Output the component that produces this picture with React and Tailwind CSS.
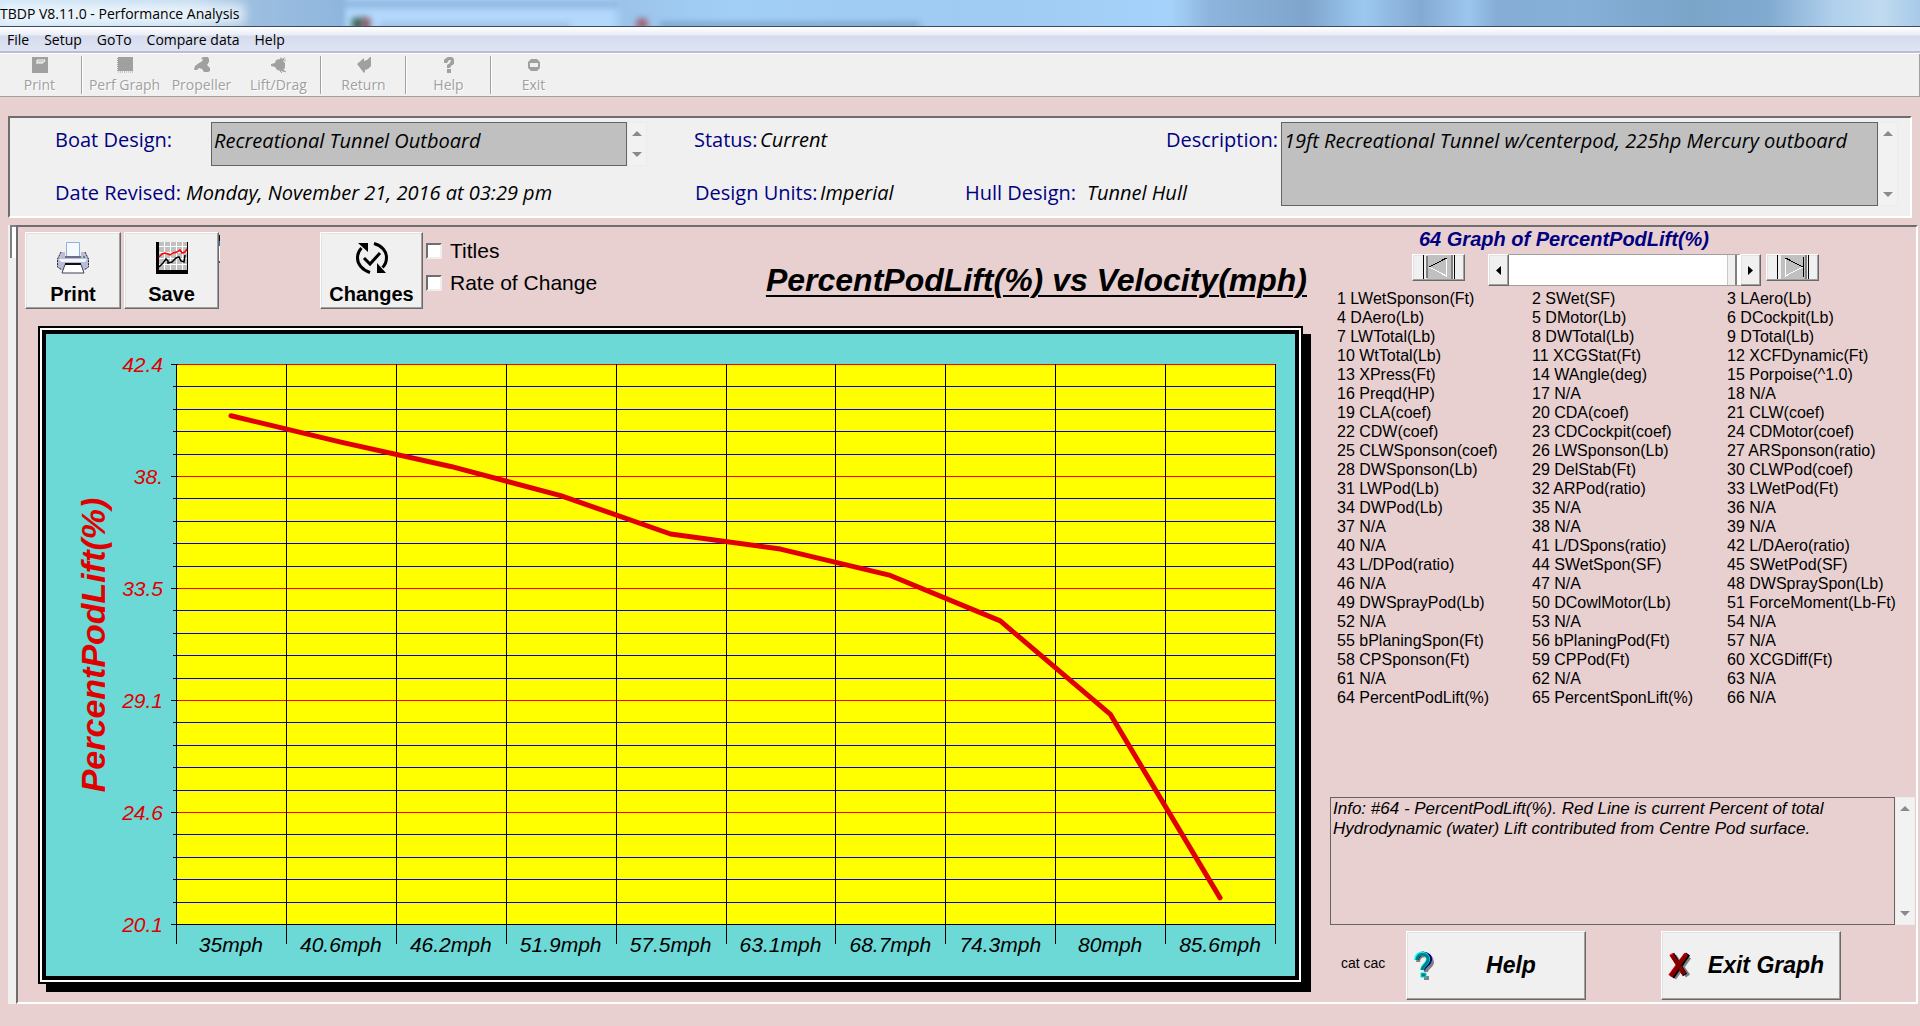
import { useState } from "react";

const raised =
  "border border-t-white border-l-white border-r-[#696969] border-b-[#696969] bg-[#f0f0f0] shadow-[inset_-1px_-1px_0_#a0a0a0,inset_1px_1px_0_#e3e3e3]";
const sunken =
  "border-2 border-t-[#6e6e6e] border-l-[#6e6e6e] border-r-white border-b-white";

const menus = ["File", "Setup", "GoTo", "Compare data", "Help"];

const speeds = ["35", "40.6", "46.2", "51.9", "57.5", "63.1", "68.7", "74.3", "80", "85.6"];
const podLift = [40.34, 39.29, 38.32, 37.16, 35.63, 35.03, 33.98, 32.17, 28.46, 21.14];
const yLabels = ["42.4", "38.", "33.5", "29.1", "24.6", "20.1"];

const graphs = [
  "LWetSponson(Ft)", "SWet(SF)", "LAero(Lb)",
  "DAero(Lb)", "DMotor(Lb)", "DCockpit(Lb)",
  "LWTotal(Lb)", "DWTotal(Lb)", "DTotal(Lb)",
  "WtTotal(Lb)", "XCGStat(Ft)", "XCFDynamic(Ft)",
  "XPress(Ft)", "WAngle(deg)", "Porpoise(^1.0)",
  "Preqd(HP)", "N/A", "N/A",
  "CLA(coef)", "CDA(coef)", "CLW(coef)",
  "CDW(coef)", "CDCockpit(coef)", "CDMotor(coef)",
  "CLWSponson(coef)", "LWSponson(Lb)", "ARSponson(ratio)",
  "DWSponson(Lb)", "DelStab(Ft)", "CLWPod(coef)",
  "LWPod(Lb)", "ARPod(ratio)", "LWetPod(Ft)",
  "DWPod(Lb)", "N/A", "N/A",
  "N/A", "N/A", "N/A",
  "N/A", "L/DSpons(ratio)", "L/DAero(ratio)",
  "L/DPod(ratio)", "SWetSpon(SF)", "SWetPod(SF)",
  "N/A", "N/A", "DWSpraySpon(Lb)",
  "DWSprayPod(Lb)", "DCowlMotor(Lb)", "ForceMoment(Lb-Ft)",
  "N/A", "N/A", "N/A",
  "bPlaningSpon(Ft)", "bPlaningPod(Ft)", "N/A",
  "CPSponson(Ft)", "CPPod(Ft)", "XCGDiff(Ft)",
  "N/A", "N/A", "N/A",
  "PercentPodLift(%)", "PercentSponLift(%)", "N/A",
];

function TitleBar() {
  return (
    <header className="relative h-[27px] overflow-hidden border-b border-[#3f4a5c] bg-[linear-gradient(90deg,#cfe6f8_0%,#c3dcf0_10%,#9dbfe0_13%,#8fb6de_17.8%,#b3d8fc_18.2%,#b3d8fc_31.8%,#9cc4ea_32.5%,#a2cff6_38%,#9fcaf2_50%,#a5d2fa_61%,#8db4dc_63%,#7fa5cc_68%,#9cc8f0_71%,#84aad2_74%,#9cc6ee_76.5%,#84acd4_78%,#86b0d8_82%,#7aa4c8_88%,#80aad0_92%,#b0d0ec_95.5%,#c0daf0_98%,#a8cae8_100%)]">
      <div className="absolute left-[340px] top-0 h-2 w-[280px] bg-[#8fb6de] blur-[3px]" />
      <div className="absolute left-[352px] top-[18px] h-3 w-3 bg-[#3c6454] blur-[3px]" />
      <div className="absolute left-[362px] top-[18px] h-3 w-2 bg-[#8a5058] blur-[3px]" />
      <div className="absolute left-[380px] top-[24px] h-1 w-[190px] bg-[#8fb0d2] blur-[3px]" />
      <div className="absolute left-[636px] top-[18px] h-3 w-3 rounded-full bg-[#a05a68] blur-[3px]" />
      <div className="absolute left-[660px] top-[23px] h-1 w-[260px] bg-[#6b90b6] blur-[3px]" />
      <div className="absolute left-0 top-1 h-5 w-[245px] bg-white/60 blur-[5px]" />
      <h1 className="relative text-[14px] leading-[27px] text-black">TBDP V8.11.0 - Performance Analysis</h1>
    </header>
  );
}

function ToolButton({ label, children }) {
  return (
    <button
      type="button"
      className="flex w-[77px] flex-col items-center pt-[3px] text-[14px] leading-5 text-[#a0a0a0] [text-shadow:1px_1px_0_#fff]"
    >
      <svg width="16" height="16" viewBox="0 0 16 16" fill="#a0a0a0" className="mb-[2px]">
        {children}
      </svg>
      {label}
    </button>
  );
}

function Separator() {
  return <div className="mx-[3px] my-[2px] w-[2px] border-l border-l-[#a0a0a0] border-r border-r-white" />;
}

function Toolbar() {
  return (
    <div className="flex h-11 border-t border-b border-t-white border-b-[#a0a0a0] bg-[#f0f0f0] pl-px">
      <ToolButton label="Print">
        <path d="M0 0h16v16H0z" />
        <path d="M5 3h8l-1 2H5zM4 6h7" fill="none" stroke="#fff" />
      </ToolButton>
      <Separator />
      <ToolButton label="Perf Graph">
        <path d="M0 0h16v14H0z" />
        <path d="M1 15h15" stroke="#a0a0a0" strokeDasharray="1 1" />
        <path d="M.5 0v15" stroke="#f0f0f0" strokeDasharray="1 1" />
      </ToolButton>
      <ToolButton label="Propeller">
        <path d="M7 1l3-1h4l1 2v3l-2 3 3 3v3l-2 1h-4l-2-3-3-1-2 2H0l1-4 4-3 2-1 2-2z" />
      </ToolButton>
      <ToolButton label="Lift/Drag">
        <path d="M0 7l4-1 1-3 4-1 1-2 1 2 3-2-1 3-1 1 2 2v5l-2 2 2 1-1 1-3-1-4-1-2-3-4-1z" />
        <path d="M13 4l2-1M12 13l3 2M9 14l2 2" stroke="#a0a0a0" strokeWidth="1" />
      </ToolButton>
      <Separator />
      <ToolButton label="Return">
        <path d="M1 7l7-6v3l3-1 3-3h1v9l-3 3-3 1v2L8 16z" />
      </ToolButton>
      <Separator />
      <ToolButton label="Help">
        <path d="M3 6V3l2-2 2-1h4l2 2v5l-3 2-1 2H6V8l3-2 1-3H8L6 6zM6 12h4v4H6z" />
      </ToolButton>
      <Separator />
      <ToolButton label="Exit">
        <path d="M5 2h6l3 3v6l-3 3H5l-3-3V5zM4 6v4h8V6z" fillRule="evenodd" />
      </ToolButton>
      <div className="ml-auto w-px bg-[#a0a0a0]" />
    </div>
  );
}

function ScrollArrows() {
  return (
    <div className="flex w-5 shrink-0 flex-col items-center justify-between border border-[#ececec] bg-[#f2f2f2] py-2">
      <svg width="10" height="5" viewBox="0 0 10 5">
        <path d="M5 0l5 5H0z" fill="#8a8a8a" />
      </svg>
      <svg width="10" height="5" viewBox="0 0 10 5">
        <path d="M0 0h10L5 5z" fill="#8a8a8a" />
      </svg>
    </div>
  );
}

function DesignHeader() {
  const field =
    "resize-none overflow-hidden border border-[#646464] bg-[#c0c0c0] px-[2px] pt-[2px] text-[20px] leading-8 italic text-black outline-none";
  return (
    <section className={`mx-2 mt-[19px] flex h-[102px] bg-[#f0f0f0] pr-3 pt-1 text-[20px] ${sunken}`}>
      <div className="flex-1 pl-[45px] leading-9">
        <div className="flex h-11">
          <label htmlFor="boat" className="w-[156px] text-[#000080]">Boat Design:</label>
          <textarea id="boat" className={`h-11 w-[416px] ${field}`} defaultValue="Recreational Tunnel Outboard" />
          <ScrollArrows />
          <span className="ml-[47px] w-[66px] text-[#000080]">Status:</span>
          <span className="italic">Current</span>
          <label htmlFor="description" className="ml-auto pr-[3px] text-[#000080]">Description:</label>
        </div>
        <div className="mt-[9px] flex">
          <span className="w-[131px] text-[#000080]">Date Revised:</span>
          <span className="w-[509px] italic">Monday, November 21, 2016 at 03:29 pm</span>
          <span className="w-[125px] text-[#000080]">Design Units:</span>
          <span className="w-[145px] italic">Imperial</span>
          <span className="w-[122px] text-[#000080]">Hull Design:</span>
          <span className="italic">Tunnel Hull</span>
        </div>
      </div>
      <textarea
        id="description"
        className={`h-[84px] w-[597px] ${field}`}
        defaultValue="19ft Recreational Tunnel w/centerpod, 225hp Mercury outboard"
      />
      <div className="flex h-[84px]">
        <ScrollArrows />
      </div>
    </section>
  );
}

function BigButton({ label, width, children }) {
  return (
    <button
      type="button"
      className={`flex h-[77px] flex-col items-center pt-[9px] text-[20px] leading-6 font-bold ${width} ${raised}`}
    >
      <svg width="32" height="32" viewBox="0 0 32 32" className="mb-[8px]">
        {children}
      </svg>
      {label}
    </button>
  );
}

function Check({ label }) {
  return (
    <label className="flex items-center gap-2 text-[21px] leading-8">
      <input
        type="checkbox"
        className="h-4 w-4 appearance-none border-2 border-t-[#6e6e6e] border-l-[#6e6e6e] border-r-[#f4ecec] border-b-[#f4ecec] bg-white checked:bg-[#000080]"
      />
      {label}
    </label>
  );
}

function GraphToolbar() {
  return (
    <div className="flex pt-[5px] pl-[7px]">
      <BigButton label="Print" width="w-24">
        <path d="M9.500 0.500h13v14h-13z" fill="#f4f8ff" stroke="#8fb0e0" />
        <path d="M4 10h4v5h16v-5h4l4 7v8l-5 3H5l-5-3v-8z" fill="#b9bcd6" />
        <path d="M4 10L.5 17v8L5 28M28 10l3.500 7v8L27 28" fill="none" stroke="#222433" strokeDasharray="2 1" />
        <path d="M2 17h28l-2 3H4z" fill="#f4f4fb" />
        <path d="M8 14h16v2H8z" fill="#6a6e8c" />
        <path d="M26 15h2" stroke="#3a9a7a" strokeWidth="2" />
        <path d="M8 22.500h16l3 8.500H5z" fill="#fff" stroke="#3c3f58" />
        <path d="M8 22h16" stroke="#111" strokeWidth="2" />
      </BigButton>
      <div className="w-[3px]" />
      <BigButton label="Save" width="w-[95px]">
        <path d="M0 0h32v32H0z" fill="#c0c0c0" />
        <path d="M8.500 0v28M14.500 0v28M20.500 0v28M26.500 0v28M3 4.500h29M3 10.500h29M3 16.500h29M3 22.500h29" stroke="#fff" />
        <path d="M0 0h3v28h29v4H0z" />
        <path d="M31.500 0v28" stroke="#000" />
        <path d="M3 15l3-3 3-1 3 1 2 1 3-2 4-1 3-2 2 3 3-1 2-3" fill="none" stroke="#f00" strokeWidth="1.500" />
        <path d="M3 25l4-4 3-4 2 2v2l4-1 4-4 3-1 2 4 3 1 1-7" fill="none" stroke="#000" strokeWidth="1.500" />
      </BigButton>
      <div className="w-[101px] pt-[3px]">
        <div className="h-[6px] w-px bg-[#111]" />
        <div className="h-[5px] w-px bg-[#1f6fb0]" />
        <div className="h-[15px] w-px bg-white" />
        <div className="h-[2px] w-px bg-[#555]" />
      </div>
      <BigButton label="Changes" width="w-[103px]">
        <path d="M14 30.500C6 28 1.500 22 1.500 16c0-4 2-8 4-10M18 1.500c8 2 12.500 8 12.500 14 0 4-2 8-4 10" fill="none" stroke="#000" strokeWidth="3" />
        <path d="M2 1h10v9zM30 31H21V21z" />
        <path d="M8 16l6 6 10-11" fill="none" stroke="#000" strokeWidth="3" />
      </BigButton>
      <div className="ml-[3px] pt-[3px]">
        <Check label="Titles" />
        <Check label="Rate of Change" />
      </div>
      <h2 className="ml-auto mt-[30px] pr-1 text-[32px] leading-9 font-bold italic underline decoration-2 underline-offset-4">
        PercentPodLift(%) vs Velocity(mph)
      </h2>
    </div>
  );
}

function Chart() {
  const left = 130;
  const top = 30;
  const width = 1099;
  const height = 560;
  const colX = (i) => left + (i * width) / 10;
  const rowY = (i) => top + (i * height) / 25;
  const points = podLift
    .map((v, i) => `${colX(i + 0.5)},${top + ((42.4 - v) / 22.3) * height}`)
    .join(" ");

  return (
    <div className="mt-[17px] mr-2 ml-5 border-2 border-black shadow-[8px_8px_0_#000]">
      <div className="border-2 border-white">
        <svg viewBox="0 0 1249 642" className="block h-auto w-full border-4 border-black bg-[#6cd9d6]">
          <rect x={left} y={top} width={width} height={height} fill="#ff0" />
          <g shapeRendering="crispEdges">
            {Array.from({ length: 26 }, (_, i) => {
              const major = i % 5 === 0;
              const color = i === 25 ? "#000" : major ? "#f00" : "#0000d0";
              return (
                <g key={i}>
                  <path d={`M${left} ${rowY(i) + 0.5}h${width}`} stroke={color} />
                  <path d={`M${left - (major ? 5 : 3)} ${rowY(i) + 0.5}h${major ? 7 : 4}`} stroke="#000" />
                </g>
              );
            })}
            {Array.from({ length: 11 }, (_, i) => (
              <path key={i} d={`M${colX(i) + 0.5} ${top}v${height + 20}`} stroke="#000" />
            ))}
          </g>
          <polyline points={points} fill="none" stroke="#e00000" strokeWidth="5" strokeLinejoin="round" strokeLinecap="round" />
          <g fontSize="21" fontStyle="italic">
            {yLabels.map((t, i) => (
              <text key={t} x={left - 13} y={rowY(i * 5) + 8} textAnchor="end" fill="#e00000">
                {t}
              </text>
            ))}
            {speeds.map((s, i) => (
              <text key={s} x={colX(i + 0.5)} y={top + height + 28} textAnchor="middle">
                {s}mph
              </text>
            ))}
          </g>
          <text
            transform="translate(59 311) rotate(-90)"
            textAnchor="middle"
            fontSize="34"
            fontWeight="bold"
            fontStyle="italic"
            fill="#e00000"
          >
            PercentPodLift(%)
          </text>
        </svg>
      </div>
    </div>
  );
}

function EndButton({ label, children }) {
  return (
    <button type="button" aria-label={label} className={`flex h-[27px] w-[53px] justify-center ${raised}`}>
      <svg width="32" height="24" viewBox="0 0 32 24" shapeRendering="crispEdges">
        <path d="M4 0h24v24H4z" fill="#c0c0c0" />
        {children}
      </svg>
    </button>
  );
}

function GraphPicker() {
  const [index, setIndex] = useState(64);
  const step = `h-8 w-[21px] shrink-0 flex items-center justify-center ${raised}`;
  return (
    <div className="mt-[3px] flex pl-[82px]">
      <EndButton label="First graph">
        <path d="M.5 0v24M31.500 0v24" stroke="#000" />
        <path d="M4 1v22M29 0v24" stroke="#808080" strokeWidth="2" />
        <path d="M23.500 3v18L6 12" fill="none" stroke="#fff" />
        <path d="M6 12L23.500 3" stroke="#000" />
      </EndButton>
      <div className="ml-[23px] flex h-8 w-[273px]">
        <button type="button" aria-label="Previous graph" className={step} onClick={() => setIndex(Math.max(1, index - 1))}>
          <svg width="5" height="9" viewBox="0 0 5 9"><path d="M5 0v9L0 4.500z" /></svg>
        </button>
        <input
          type="range"
          aria-label="Graph number"
          min="0"
          max="65"
          value={index}
          onChange={(e) => setIndex(Number(e.target.value))}
          className="h-8 min-w-0 flex-1 appearance-none border-t border-b border-[#a0a0a0] bg-white [&::-webkit-slider-thumb]:h-[30px] [&::-webkit-slider-thumb]:w-[10px] [&::-webkit-slider-thumb]:appearance-none [&::-webkit-slider-thumb]:border-r-2 [&::-webkit-slider-thumb]:border-l [&::-webkit-slider-thumb]:border-l-[#c8c8c8] [&::-webkit-slider-thumb]:border-r-[#808080] [&::-webkit-slider-thumb]:bg-[#f0f0f0]"
        />
        <button type="button" aria-label="Next graph" className={step} onClick={() => setIndex(Math.min(65, index + 1))}>
          <svg width="5" height="9" viewBox="0 0 5 9"><path d="M0 0v9l5-4.500z" /></svg>
        </button>
      </div>
      <div className="w-[5px]" />
      <EndButton label="Last graph">
        <path d="M.5 0v24M31.500 0v24" stroke="#000" />
        <path d="M29 0v24" stroke="#808080" strokeWidth="2" />
        <path d="M26.500 2v20" stroke="#000" />
        <path d="M8.500 3v18L26 12" fill="none" stroke="#fff" />
        <path d="M8.500 3L26 12" stroke="#000" />
      </EndButton>
    </div>
  );
}

function SidePanel() {
  const action = `flex h-[69px] w-[180px] items-center pl-[6px] text-[23px] font-bold italic ${raised}`;
  return (
    <aside className="ml-[19px] flex w-[586px] shrink-0 flex-col pb-[2px]">
      <h2 className="pl-[89px] text-[20px] leading-6 font-bold italic text-[#000080]">64 Graph of PercentPodLift(%)</h2>
      <GraphPicker />
      <ol className="mt-[3px] grid grid-cols-[195px_195px_1fr] pl-[7px] text-[16px] leading-[19px] whitespace-nowrap">
        {graphs.map((name, i) => (
          <li key={i}>{i + 1} {name}</li>
        ))}
      </ol>
      <div className="mt-auto flex h-32">
        <textarea
          aria-label="Graph info"
          className="w-[565px] resize-none overflow-hidden border border-[#646464] bg-transparent px-[2px] pt-[1px] text-[17px] leading-5 italic outline-none"
          defaultValue={"Info: #64 - PercentPodLift(%). Red Line is current Percent of total\nHydrodynamic (water) Lift contributed from Centre Pod surface."}
        />
        <ScrollArrows />
      </div>
      <div className="mt-[6px] flex items-center">
        <span className="w-[76px] pb-[6px] pl-[11px] text-[14px] leading-4">cat cac</span>
        <button type="button" className={action}>
          <svg width="24" height="30" viewBox="0 0 24 30">
            <path d="M5 11c0-9 14-9 14 0 0 5-6 5-6 10" fill="none" stroke="#808080" strokeWidth="4" />
            <path d="M11 25h5v4h-5z" fill="#808080" />
            <path d="M4 9c0-9 14-8 13 0-1 5-6 5-7 10" fill="none" stroke="#000080" strokeWidth="4" />
            <path d="M3 9c0-9 13-8 12 0-1 5-6 5-6 10" fill="none" stroke="#00ffff" strokeWidth="4" />
            <path d="M4 9c0-8 12-7 11 0-1 5-5 5-6 10" fill="none" stroke="#008080" strokeWidth="3" />
            <path d="M8 22h5v4H8z" fill="#008080" stroke="#00e0e0" />
          </svg>
          <span className="flex-1">Help</span>
        </button>
        <button type="button" className={`ml-[75px] ${action}`}>
          <svg width="24" height="30" viewBox="0 0 24 30">
            <path d="M6 5l14 20M21 6L6 27" stroke="#808080" strokeWidth="5" />
            <path d="M4 3l13 21M20 3L4 26" stroke="#000" strokeWidth="5" />
            <path d="M3 3l13 20M18 3L2 25" stroke="#f00" strokeWidth="4" />
            <path d="M4 4l12 19M18 4L3 25" stroke="#800000" strokeWidth="4" />
          </svg>
          <span className="flex-1">Exit Graph</span>
        </button>
      </div>
    </aside>
  );
}

export default function App() {
  return (
    <div className="min-h-screen bg-[#e8d0d0] font-['Liberation_Sans',Arial,sans-serif] text-black">
      <div className="font-['Open_Sans','Noto_Sans',sans-serif]">
        <TitleBar />
        <nav className="flex h-[26px] items-center gap-[15px] border-b-2 border-[#b9bdd6] bg-[linear-gradient(#fff,#e8ecf6_35%,#d5daec_36%,#e0e5f6)] pt-px pl-[7px] text-[14px]">
          {menus.map((m) => (
            <button key={m} type="button">{m}</button>
          ))}
        </nav>
        <Toolbar />
        <DesignHeader />
      </div>
      <main className="mt-[7px] ml-2 mr-[2px] flex">
        <div className="w-2 bg-[#f0f0f0] pl-[2px]">
          <div className="h-[33px] border-t-2 border-l-2 border-[#808080] bg-white" />
        </div>
        <div className={`flex flex-1 ${sunken}`}>
          <section className="flex-1 pb-[18px]">
            <GraphToolbar />
            <Chart />
          </section>
          <SidePanel />
        </div>
      </main>
    </div>
  );
}
